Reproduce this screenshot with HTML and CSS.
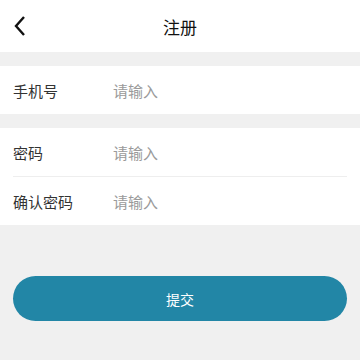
FILE: index.html
```html
<!DOCTYPE html>
<html>
<head>
  <title>注册</title>
  <link rel="stylesheet" href="styles.css">
</head>
<body>
  <div class="header">
    <span class="back">
      <svg width="14" height="22" viewBox="0 0 14 22">
        <path d="M11 2 L3 11 L11 20" fill="none" stroke="#111" stroke-width="2.4"/>
      </svg>
    </span>
    <span class="title">注册</span>
  </div>

  <div class="group">
    <div class="row">
      <span class="label">手机号</span>
      <input class="field" type="text" placeholder="请输入">
    </div>
  </div>

  <div class="group">
    <div class="row line">
      <span class="label">密码</span>
      <input class="field" type="password" placeholder="请输入">
    </div>
    <div class="row">
      <span class="label">确认密码</span>
      <input class="field" type="password" placeholder="请输入">
    </div>
  </div>

  <div class="actions">
    <button class="submit">提交</button>
  </div>
</body>
</html>
```

FILE: styles.css
```css
body {
  margin: 0;
  background: #f0f0f0;
  font-family: "Noto Sans CJK SC", "Noto Sans", sans-serif;
  color: #222;
}

.header {
  height: 52px;
  background: #fff;
  display: flex;
  align-items: center;
  justify-content: center;
  position: relative;
}

.back {
  position: absolute;
  left: 13px;
  top: 15px;
}

.title {
  font-size: 17px;
  color: #111;
}

.group {
  background: #fff;
  margin-top: 14px;
  padding: 0 13px;
}

.row {
  height: 48px;
  display: flex;
  align-items: center;
}

.line {
  border-bottom: 1px solid #eee;
}

.label {
  width: 100px;
  font-size: 15px;
  color: #333;
}

.field {
  flex: 1;
  border: none;
  outline: none;
  padding: 0;
  font-family: inherit;
  font-size: 15px;
  color: #333;
  background: transparent;
}

.field::placeholder {
  color: #9a9a9a;
}

.actions {
  padding: 51px 13px 0;
}

.submit {
  width: 100%;
  height: 45px;
  border: none;
  border-radius: 23px;
  background: #2286a6;
  color: #fff;
  font-family: inherit;
  font-size: 14px;
}
```
